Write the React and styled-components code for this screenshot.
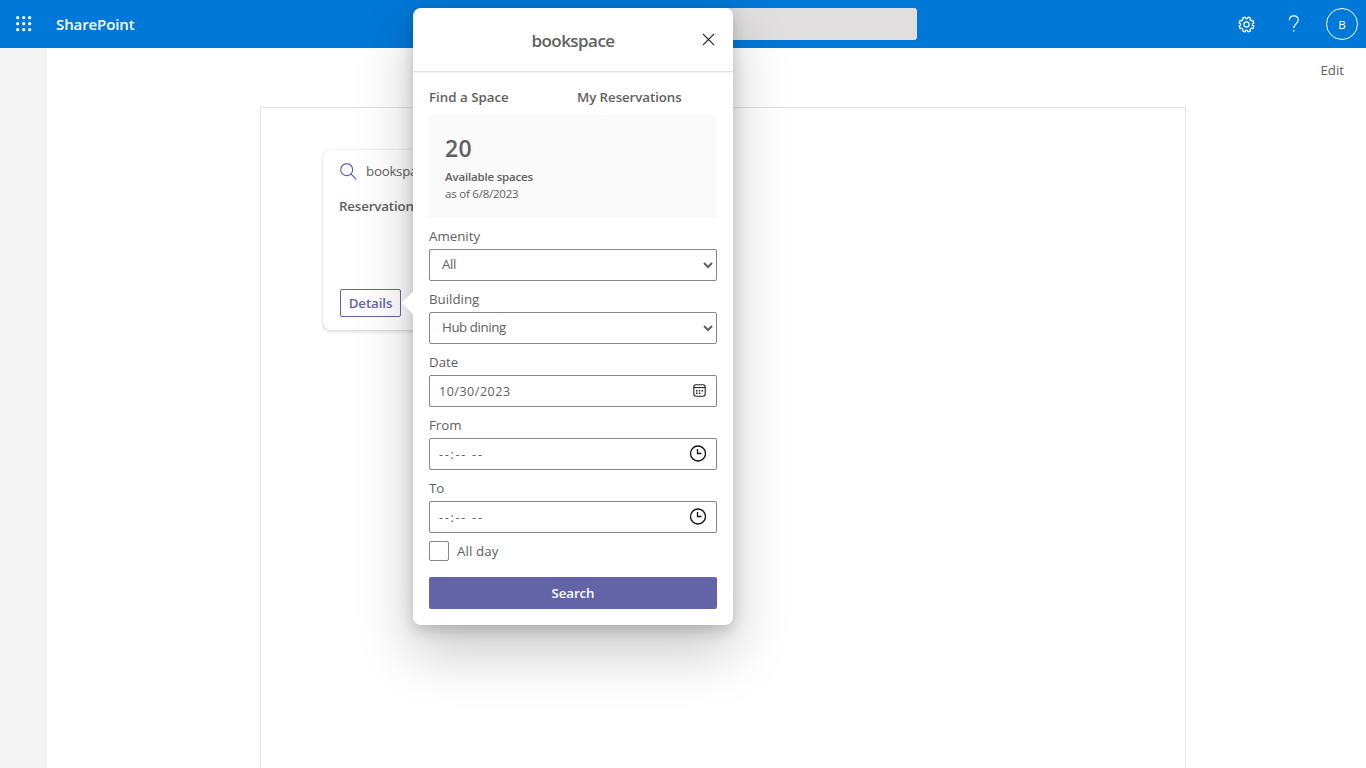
import React from "react";
import styled, { createGlobalStyle } from "styled-components";

const Global = createGlobalStyle`
  * { box-sizing: border-box; }
  body {
    margin: 0;
    background: #fff;
    color: #616161;
    font-family: "Open Sans", "Noto Sans", sans-serif;
    font-size: 13.3px;
    overflow: hidden;
  }
`;

const Page = styled.div`
  position: relative;
  display: flex;
  flex-direction: column;
  height: 768px;
  width: 1366px;
  overflow: hidden;
`;

const Suite = styled.header`
  display: grid;
  grid-template-columns: 449px 468px 1fr;
  height: 48px;
  flex: none;
  background: #0078d7;
  color: #fff;
`;

const Brand = styled.div`
  display: flex;
  align-items: center;
  gap: 24px;
  padding-left: 16px;
  svg { display: block; }
`;

const Fit = styled.span`
  display: inline-block;
  white-space: pre;
  font-size: ${(p) => p.$size || 13.3}px;
  font-weight: ${(p) => p.$weight || 400};
  line-height: ${(p) => p.$line || 20}px;
  letter-spacing: ${(p) => p.$track || 0}px;
`;

const SearchBox = styled.div`
  height: 32px;
  margin-top: 8px;
  background: #e1dfdd;
  border-radius: 3px;
`;

const Tools = styled.div`
  display: flex;
  align-items: center;
  justify-content: flex-end;
  padding-right: 8px;
  svg { display: block; }
`;

const Avatar = styled.div`
  display: flex;
  align-items: center;
  justify-content: center;
  width: 32px;
  height: 32px;
  margin-left: 26px;
  padding-top: 2px;
  border: 1px solid #fff;
  border-radius: 50%;
`;

const Body = styled.div`
  display: flex;
  flex: 1;
`;

const Rail = styled.nav`
  width: 47px;
  background: #f4f4f4;
`;

const Main = styled.main`
  display: flex;
  flex-direction: column;
  flex: 1;
`;

const CommandBar = styled.div`
  display: flex;
  justify-content: flex-end;
  height: 59px;
  padding: 12px 22px 0 0;
`;

const Canvas = styled.section`
  flex: 1;
  width: 926px;
  margin-left: 213px;
  padding: 42px 0 0 62px;
  border: 1px solid #e4e4e4;
  border-bottom: 0;
`;

const Card = styled.article`
  display: flex;
  flex-direction: column;
  align-items: flex-start;
  width: 320px;
  height: 180px;
  padding: 11px 16px 13px;
  background: #fff;
  border-radius: 8px;
  box-shadow: 0 1.6px 3.6px rgba(0, 0, 0, 0.13), 0 0 3px rgba(0, 0, 0, 0.08);
`;

const CardHead = styled.div`
  display: flex;
  align-items: center;
  gap: 9px;
  margin-bottom: 15px;
  svg { display: block; margin-left: 1px; }
`;

const Outlined = styled.button`
  display: flex;
  align-items: center;
  justify-content: center;
  width: 61px;
  height: 28px;
  margin: auto 0 0 1px;
  padding: 0;
  font-family: inherit;
  color: #6264a7;
  background: transparent;
  border: 1px solid #6264a7;
  border-radius: 2px;
`;

const Callout = styled.aside`
  position: absolute;
  left: 413px;
  top: 8px;
  width: 320px;
  height: 617px;
  background: #fff;
  border-radius: 8px;
  box-shadow: 0 25.6px 57.6px rgba(0, 0, 0, 0.22), 0 4.8px 14.4px rgba(0, 0, 0, 0.18);
`;

const Beak = styled.i`
  position: absolute;
  left: -8px;
  top: 287px;
  width: 16px;
  height: 16px;
  background: #fff;
  transform: rotate(45deg);
`;

const CalloutHead = styled.div`
  display: grid;
  grid-template-columns: 48px 1fr 48px;
  align-items: center;
  justify-items: center;
  height: 64px;
  padding-top: 3px;
  border-bottom: 1px solid #e5e5e5;
  box-shadow: 0 1px 1px rgba(0, 0, 0, 0.05);
  svg { display: block; margin: 0 2px 3px 0; }
`;

const Content = styled.div`
  display: flex;
  flex-direction: column;
  padding: 15px 16px 0;
`;

const Tabs = styled.div`
  display: grid;
  grid-template-columns: 148px 1fr;
  height: 28px;
`;

const Stat = styled.div`
  display: flex;
  flex-direction: column;
  align-items: flex-start;
  height: 103px;
  padding: 17px 16px 0;
  margin-bottom: 8px;
  background: #fafafa;
`;

const Field = styled.div`
  display: flex;
  flex-direction: column;
  align-items: flex-start;
  gap: 3px;
  height: 63px;
`;

const Select = styled.select`
  width: 288px;
  height: 32px;
  padding: 0 0 3px 8px;
  font: 13.3px/20px "Open Sans", sans-serif;
  letter-spacing: -0.42px;
  color: #616161;
  background: #fff;
  border: 1px solid #8a8886;
  border-radius: 2px;
`;

const Picker = styled.div`
  display: flex;
  align-items: center;
  justify-content: space-between;
  width: 288px;
  height: 32px;
  padding: 2px 10px 0 9px;
  border: 1px solid #8a8886;
  border-radius: 2px;
  svg { display: block; margin-bottom: 4px; }
`;

const CheckRow = styled.label`
  display: flex;
  align-items: center;
  gap: 8px;
  height: 20px;
`;

const CheckBox = styled.span`
  width: 20px;
  height: 20px;
  border: 1px solid #8a8886;
  border-radius: 2px;
`;

const Primary = styled.button`
  display: flex;
  align-items: center;
  justify-content: center;
  width: 288px;
  height: 32px;
  margin-top: 16px;
  padding: 0;
  font-family: inherit;
  color: #fff;
  background: #6264a7;
  border: 0;
  border-radius: 2px;
`;

const Waffle = () => (
  <svg width="16" height="16" fill="#fff">
    {[1.7, 7.7, 13.7].map((y) => [1.7, 7.7, 13.7].map((x) => <circle key={x + "-" + y} cx={x} cy={y} r="1.6" />))}
  </svg>
);

const gearPath = (() => {
  const points = [];
  for (let i = 0; i < 8; i++) {
    [[-14, 6], [-10, 7.6], [10, 7.6], [14, 6]].forEach(([d, r]) => {
      const a = ((i * 45 + 22.5 + d) * Math.PI) / 180;
      points.push((8.5 + r * Math.cos(a)).toFixed(2) + " " + (8.5 + r * Math.sin(a)).toFixed(2));
    });
  }
  return "M" + points.join("L") + "Z";
})();

const Gear = () => (
  <svg width="17" height="17" fill="none" stroke="#fff" strokeWidth="1.2" strokeLinejoin="round">
    <path d={gearPath} />
    <circle cx="8.5" cy="8.5" r="2.6" />
  </svg>
);

const HelpIcon = styled.svg`
  margin-left: 33px;
`;

const Help = () => (
  <HelpIcon width="12" height="18" fill="none" stroke="#fff" strokeWidth="1.15">
    <path d="M1.4 5.2C1.4 2.4 3.2.9 5.8.9s4.5 1.6 4.5 4.1c0 3.6-4.6 4-4.6 8.2" />
    <path d="M5.7 15v1.6" strokeWidth="1.4" />
  </HelpIcon>
);

const Lens = () => (
  <svg width="17" height="17" fill="none" stroke="#6264a7" strokeWidth="1.2">
    <circle cx="6.7" cy="6.7" r="6" />
    <path d="M11 11l5.3 5.3" />
  </svg>
);

const Close = () => (
  <svg width="13" height="13" fill="none" stroke="#333" strokeWidth="1.1">
    <path d="M1 1l11 11M12 1L1 12" />
  </svg>
);

const Calendar = () => (
  <svg width="13" height="13" fill="none" stroke="#242424" strokeWidth="1.1">
    <rect x=".8" y=".8" width="11.4" height="11.4" rx="2.2" />
    <path d="M1 3.6h11" />
    <path d="M3 6.7h1.5M5.8 6.7h1.5M8.6 6.7h1.5M3 9.3h1.5M5.8 9.3h1.5" strokeWidth="1.5" />
  </svg>
);

const Clock = () => (
  <svg width="17" height="17" fill="none" stroke="#111" strokeWidth="1.3">
    <circle cx="9" cy="8.5" r="7.5" />
    <path d="M8.5 4v4.5h4" />
  </svg>
);

export default function App() {
  return (
    <Page>
      <Global />
      <Suite>
        <Brand>
          <Waffle />
          <Fit $size={15} $weight={600} $track={-0.1}>SharePoint</Fit>
        </Brand>
        <SearchBox />
        <Tools>
          <Gear />
          <Help />
          <Avatar><Fit $size={11.5}>B</Fit></Avatar>
        </Tools>
      </Suite>
      <Body>
        <Rail />
        <Main>
          <CommandBar><Fit>Edit</Fit></CommandBar>
          <Canvas>
            <Card>
              <CardHead><Lens /><Fit $track={-0.25}>bookspace</Fit></CardHead>
              <Fit $weight={600} $track={-0.15}>Reservations</Fit>
              <Outlined><Fit $weight={600} $track={-0.1}>Details</Fit></Outlined>
            </Card>
          </Canvas>
        </Main>
      </Body>
      <Callout>
        <Beak />
        <CalloutHead>
          <span />
          <Fit $size={17} $weight={600} $line={24} $track={-0.55}>bookspace</Fit>
          <Close />
        </CalloutHead>
        <Content>
          <Tabs>
            <Fit $weight={600}>Find a Space</Fit>
            <Fit $weight={600} $track={-0.07}>My Reservations</Fit>
          </Tabs>
          <Stat>
            <Fit $size={23} $weight={600} $line={32} $track={0.3}>20</Fit>
            <Fit $size={11.5} $weight={600} $line={26} $track={-0.18}>Available spaces</Fit>
            <Fit $size={11.5} $weight={400} $line={8} $track={-0.22}>as of 6/8/2023</Fit>
          </Stat>
          <Field>
            <Fit>Amenity</Fit>
            <Select defaultValue="All"><option>All</option></Select>
          </Field>
          <Field>
            <Fit>Building</Fit>
            <Select defaultValue="Hub dining"><option>Hub dining</option></Select>
          </Field>
          <Field>
            <Fit>Date</Fit>
            <Picker><Fit $size={12.5} $track={0.52}>10/30/2023</Fit><Calendar /></Picker>
          </Field>
          <Field>
            <Fit>From</Fit>
            <Picker><Fit $size={12.5} $track={1.75}>--:-- --</Fit><Clock /></Picker>
          </Field>
          <Field>
            <Fit>To</Fit>
            <Picker><Fit $size={12.5} $track={1.75}>--:-- --</Fit><Clock /></Picker>
          </Field>
          <CheckRow><CheckBox /><Fit $track={0.1}>All day</Fit></CheckRow>
          <Primary><Fit $weight={600} $track={-0.1}>Search</Fit></Primary>
        </Content>
      </Callout>
    </Page>
  );
}
